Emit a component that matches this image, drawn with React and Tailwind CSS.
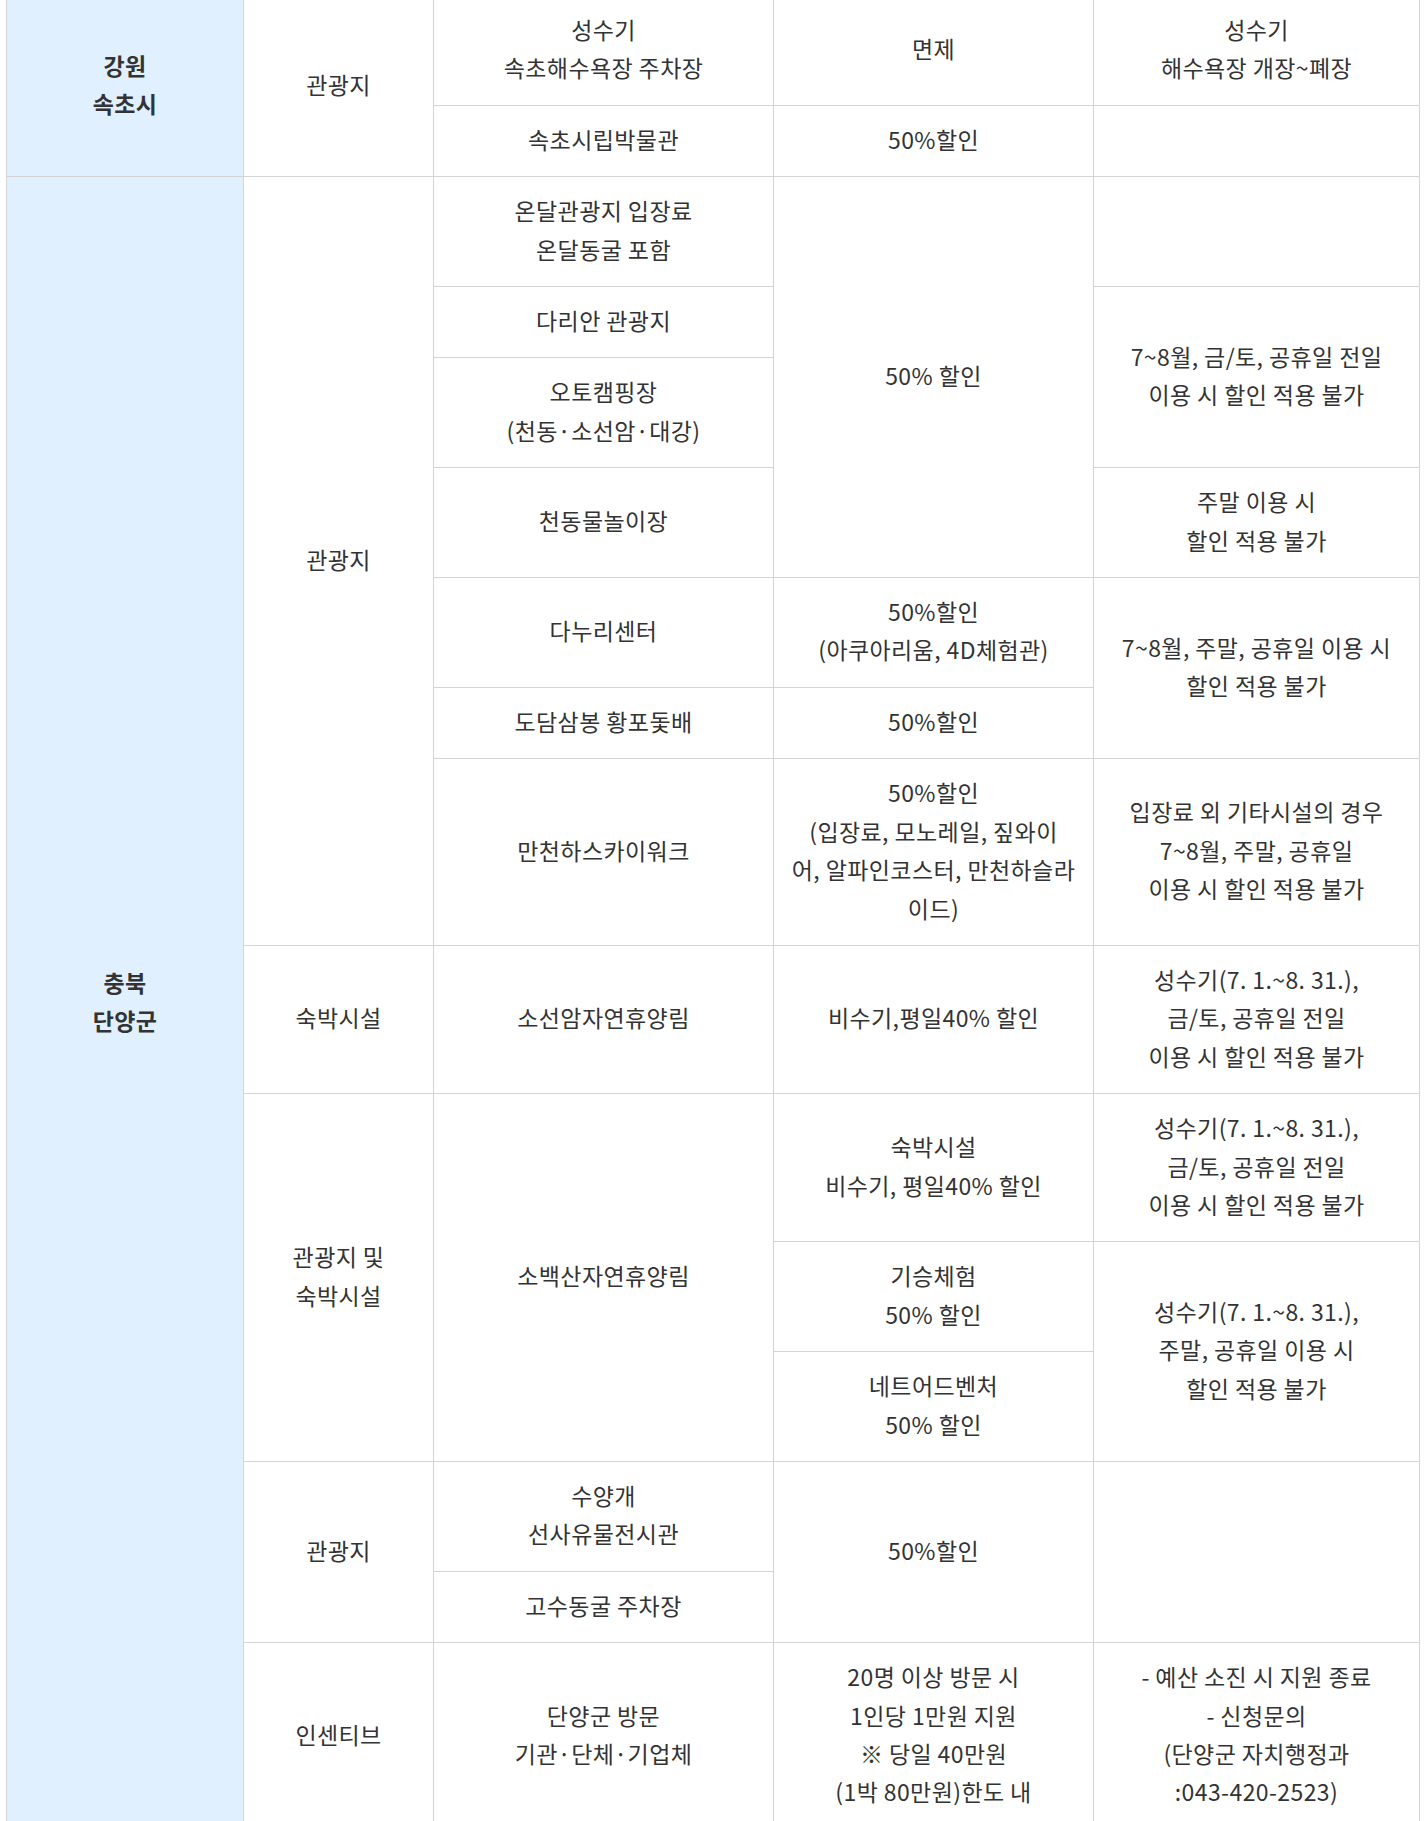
const cell =
  "border border-[#d4d4d4] px-[8px] pt-[14px] pb-[18px] text-center align-middle leading-[38.4px] text-[#333]";
const head =
  "border border-[#d4d4d4] px-[8px] pt-[14px] pb-[18px] text-center align-middle leading-[38.4px] text-[#333] bg-[#e1f0ff] font-semibold";

function Lines({ children }) {
  return children.map((t, i) => (
    <span key={i} className="block whitespace-nowrap">
      {t}
    </span>
  ));
}

export default function App() {
  return (
    <div
      className="h-[1821px] w-[1427px] overflow-hidden bg-white pl-[6px]"
      style={{ fontFamily: '"Noto Sans CJK KR", "Noto Sans", sans-serif' }}
    >
      <table className="-mt-[5px] w-[1413px] table-fixed border-collapse text-[23px] tracking-[0.4px]">
        <colgroup>
          <col className="w-[237px]" />
          <col className="w-[190px]" />
          <col className="w-[340px]" />
          <col className="w-[320px]" />
          <col className="w-[326px]" />
        </colgroup>
        <tbody>
          {/* 강원 속초시 */}
          <tr>
            <td rowSpan={2} className={head}>
              <Lines>{["강원", "속초시"]}</Lines>
            </td>
            <td rowSpan={2} className={cell}>관광지</td>
            <td className={cell}>
              <Lines>{["성수기", "속초해수욕장 주차장"]}</Lines>
            </td>
            <td className={cell}>면제</td>
            <td className={cell}>
              <Lines>{["성수기", "해수욕장 개장~폐장"]}</Lines>
            </td>
          </tr>
          <tr>
            <td className={cell}>속초시립박물관</td>
            <td className={cell}>50%할인</td>
            <td className={cell}></td>
          </tr>

          {/* 충북 단양군 */}
          <tr>
            <td rowSpan={14} className={head}>
              <Lines>{["충북", "단양군"]}</Lines>
            </td>
            <td rowSpan={7} className={cell}>관광지</td>
            <td className={cell}>
              <Lines>{["온달관광지 입장료", "온달동굴 포함"]}</Lines>
            </td>
            <td rowSpan={4} className={cell}>50% 할인</td>
            <td className={cell}></td>
          </tr>
          <tr>
            <td className={cell}>다리안 관광지</td>
            <td rowSpan={2} className={cell}>
              <Lines>{["7~8월, 금/토, 공휴일 전일", "이용 시 할인 적용 불가"]}</Lines>
            </td>
          </tr>
          <tr>
            <td className={cell}>
              <Lines>{["오토캠핑장", "(천동·소선암·대강)"]}</Lines>
            </td>
          </tr>
          <tr>
            <td className={cell}>천동물놀이장</td>
            <td className={cell}>
              <Lines>{["주말 이용 시", "할인 적용 불가"]}</Lines>
            </td>
          </tr>
          <tr>
            <td className={cell}>다누리센터</td>
            <td className={cell}>
              <Lines>{["50%할인", "(아쿠아리움, 4D체험관)"]}</Lines>
            </td>
            <td rowSpan={2} className={cell}>
              <Lines>{["7~8월, 주말, 공휴일 이용 시", "할인 적용 불가"]}</Lines>
            </td>
          </tr>
          <tr>
            <td className={cell}>도담삼봉 황포돛배</td>
            <td className={cell}>50%할인</td>
          </tr>
          <tr>
            <td className={cell}>만천하스카이워크</td>
            <td className={cell}>
              <Lines>
                {["50%할인", "(입장료, 모노레일, 짚와이", "어, 알파인코스터, 만천하슬라", "이드)"]}
              </Lines>
            </td>
            <td className={cell}>
              <Lines>
                {["입장료 외 기타시설의 경우", "7~8월, 주말, 공휴일", "이용 시 할인 적용 불가"]}
              </Lines>
            </td>
          </tr>
          <tr>
            <td className={cell}>숙박시설</td>
            <td className={cell}>소선암자연휴양림</td>
            <td className={cell}>비수기,평일40% 할인</td>
            <td className={cell}>
              <Lines>
                {["성수기(7. 1.~8. 31.),", "금/토, 공휴일 전일", "이용 시 할인 적용 불가"]}
              </Lines>
            </td>
          </tr>
          <tr>
            <td rowSpan={3} className={cell}>
              <Lines>{["관광지 및", "숙박시설"]}</Lines>
            </td>
            <td rowSpan={3} className={cell}>소백산자연휴양림</td>
            <td className={cell}>
              <Lines>{["숙박시설", "비수기, 평일40% 할인"]}</Lines>
            </td>
            <td className={cell}>
              <Lines>
                {["성수기(7. 1.~8. 31.),", "금/토, 공휴일 전일", "이용 시 할인 적용 불가"]}
              </Lines>
            </td>
          </tr>
          <tr>
            <td className={cell}>
              <Lines>{["기승체험", "50% 할인"]}</Lines>
            </td>
            <td rowSpan={2} className={cell}>
              <Lines>
                {["성수기(7. 1.~8. 31.),", "주말, 공휴일 이용 시", "할인 적용 불가"]}
              </Lines>
            </td>
          </tr>
          <tr>
            <td className={cell}>
              <Lines>{["네트어드벤처", "50% 할인"]}</Lines>
            </td>
          </tr>
          <tr>
            <td rowSpan={2} className={cell}>관광지</td>
            <td className={cell}>
              <Lines>{["수양개", "선사유물전시관"]}</Lines>
            </td>
            <td rowSpan={2} className={cell}>50%할인</td>
            <td rowSpan={2} className={cell}></td>
          </tr>
          <tr>
            <td className={cell}>고수동굴 주차장</td>
          </tr>
          <tr>
            <td className={cell}>인센티브</td>
            <td className={cell}>
              <Lines>{["단양군 방문", "기관·단체·기업체"]}</Lines>
            </td>
            <td className={cell}>
              <Lines>
                {["20명 이상 방문 시", "1인당 1만원 지원", "※ 당일 40만원", "(1박 80만원)한도 내"]}
              </Lines>
            </td>
            <td className={cell}>
              <Lines>
                {["- 예산 소진 시 지원 종료", "- 신청문의", "(단양군 자치행정과", ":043-420-2523)"]}
              </Lines>
            </td>
          </tr>
        </tbody>
      </table>
    </div>
  );
}
